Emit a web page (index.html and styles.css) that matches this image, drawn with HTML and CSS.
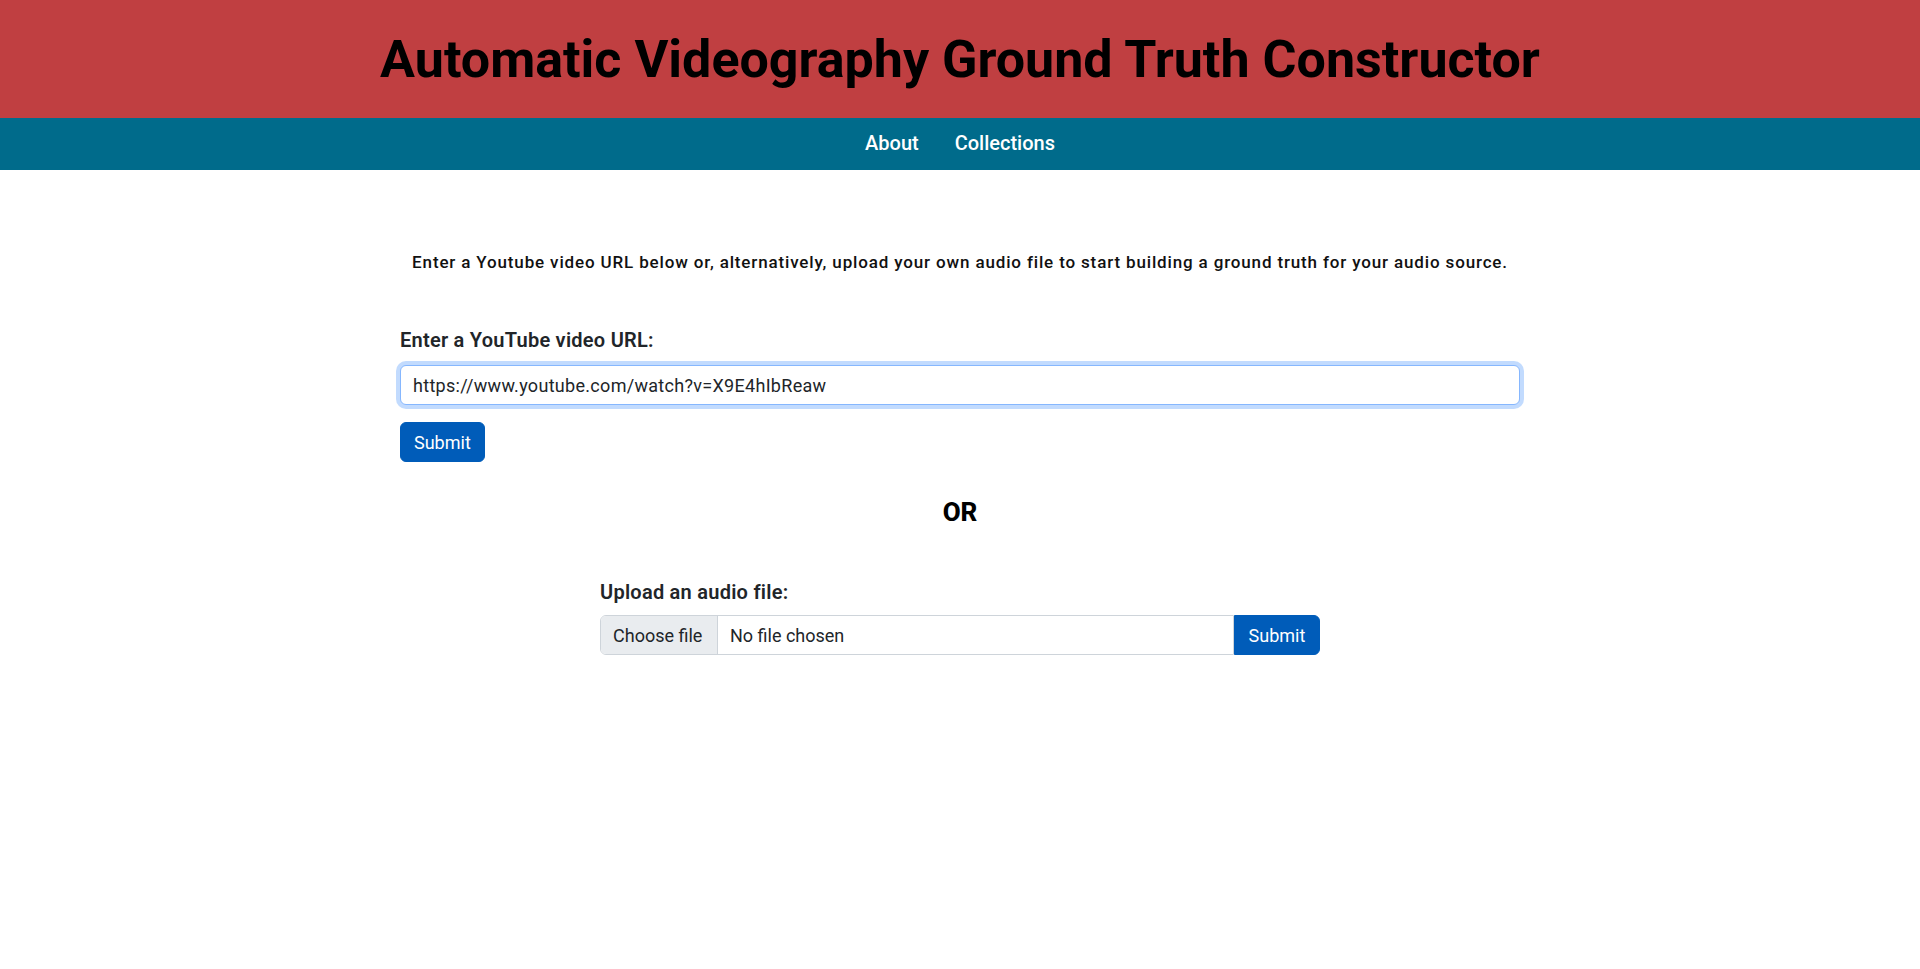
FILE: index.html
```html
<!DOCTYPE html>
<html lang="en">
<head>
<meta charset="utf-8">
<title>Automatic Videography Ground Truth Constructor</title>
<link rel="stylesheet" href="styles.css">
</head>
<body>
<header class="banner">
  <h1 class="banner-title">Automatic Videography Ground Truth Constructor</h1>
</header>
<nav class="topnav">
  <a class="topnav-link" href="#">About</a>
  <a class="topnav-link" href="#">Collections</a>
</nav>
<main class="page">
  <p class="intro">Enter a Youtube video URL below or, alternatively, upload your own audio file to start building a ground truth for your audio source.</p>
  <form class="url-form">
    <label class="field-label" for="url">Enter a YouTube video URL:</label>
    <input class="text-input is-focused" id="url" type="text" value="https://www.youtube.com/watch?v=X9E4hIbReaw">
    <button class="btn" type="button">Submit</button>
  </form>
  <h2 class="or">OR</h2>
  <form class="upload-form">
    <label class="field-label" for="file">Upload an audio file:</label>
    <div class="upload-row">
      <div class="file-input">
        <span class="file-button">Choose file</span>
        <span class="file-name">No file chosen</span>
      </div>
      <button class="btn btn-attached" type="button">Submit</button>
    </div>
  </form>
</main>
</body>
</html>
```
FILE: styles.css
```css
* { box-sizing: border-box; }
html, body { margin: 0; padding: 0; }
body {
  font-family: Roboto, "Noto Sans", "Liberation Sans", sans-serif;
  color: #212529;
  background: #fff;
  font-size: 16px;
  line-height: 1.5;
}
.banner {
  background: #c03f41;
  height: 118px;
  display: flex;
  align-items: center;
  justify-content: center;
}
.banner-title {
  margin: 0;
  color: #000;
  font-size: 52px;
  font-weight: 700;
  line-height: 1.2;
  padding-top: 2px;
}
.topnav {
  background: #006b8b;
  height: 52px;
  display: flex;
  align-items: center;
  justify-content: center;
  gap: 36px;
}
.topnav-link {
  color: #fff;
  text-decoration: none;
  font-size: 20px;
  font-weight: 500;
  padding-bottom: 2px;
}
.page {
  width: 1120px;
  margin: 0 auto;
  padding-top: 80px;
}
.intro {
  margin: 0;
  text-align: center;
  font-size: 17px;
  letter-spacing: 0.85px;
  font-weight: 500;
  line-height: 24px;
  color: #111;
}
.url-form {
  display: flex;
  flex-direction: column;
  align-items: flex-start;
  margin-top: 54px;
}
.field-label {
  font-size: 20px;
  letter-spacing: 0.25px;
  font-weight: 600;
  line-height: 24px;
  margin-bottom: 13px;
}
.text-input {
  width: 100%;
  height: 40px;
  padding: 0 12px;
  font: inherit;
  font-size: 18px;
  letter-spacing: 0.3px;
  color: #212529;
  border: 1px solid #ced4da;
  border-radius: 6px;
  outline: none;
}
.text-input.is-focused {
  border-color: #86b7fe;
  box-shadow: 0 0 0 4px rgba(13, 110, 253, 0.25);
}
.btn {
  height: 40px;
  padding: 0 13px;
  border: 1px solid #005cb9;
  background: #005cb9;
  color: #fff;
  font: inherit;
  font-size: 18px;
  border-radius: 6px;
  margin-top: 17px;
}
.or {
  margin: 34px 0 0;
  text-align: center;
  font-size: 26px;
  font-weight: 800;
  color: #000;
  line-height: 32px;
}
.upload-form {
  width: 720px;
  margin: 52px auto 0;
  display: flex;
  flex-direction: column;
}
.upload-form .field-label { margin-bottom: 11px; }
.upload-row {
  display: flex;
}
.file-input {
  flex: 1;
  display: flex;
  height: 40px;
  border: 1px solid #ced4da;
  border-radius: 6px 0 0 6px;
  overflow: hidden;
  font-size: 18px;
}
.file-button {
  width: 117px;
  padding-left: 12px;
  background: #e9ecef;
  border-right: 1px solid #ced4da;
  display: flex;
  align-items: center;
}
.file-name {
  display: flex;
  align-items: center;
  padding-left: 12px;
}
.btn-attached {
  margin-top: 0;
  width: 86px;
  border-radius: 0 6px 6px 0;
}
```
